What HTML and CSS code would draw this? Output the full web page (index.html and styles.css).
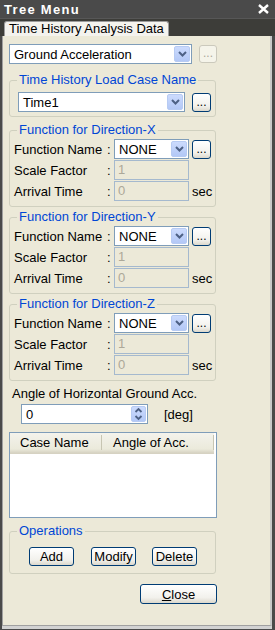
FILE: index.html
```html
<!DOCTYPE html>
<html>
<head>
<meta charset="utf-8">
<link rel="stylesheet" href="styles.css">
</head>
<body>
<div class="window">
  <div class="titlebar">
    <span class="title">Tree Menu</span>
    <svg class="close" width="11" height="10" viewBox="0 0 11 10"><path d="M1 1 L10 9 M10 1 L1 9" stroke="#fff" stroke-width="2.4" fill="none"/></svg>
  </div>
  <div class="tabstrip"><div class="tab">Time History Analysis Data</div></div>
  <div class="panel">
    <div class="row toprow">
      <div class="combo w-main"><span class="val">Ground Acceleration</span><span class="arrow"><svg width="9" height="6" viewBox="0 0 9 6"><path d="M1 1 L4.5 4.5 L8 1" stroke="#4D6185" stroke-width="2" fill="none"/></svg></span></div>
      <button class="dots disabled">...</button>
    </div>

    <fieldset class="group g-load">
      <legend>Time History Load Case Name</legend>
      <div class="row loadrow">
        <div class="combo w-load"><span class="val">Time1</span><span class="arrow"><svg width="9" height="6" viewBox="0 0 9 6"><path d="M1 1 L4.5 4.5 L8 1" stroke="#4D6185" stroke-width="2" fill="none"/></svg></span></div>
        <button class="dots">...</button>
      </div>
    </fieldset>

    <fieldset class="group g-func">
      <legend>Function for Direction-X</legend>
      <div class="fgrid">
        <span class="lbl">Function Name</span><span class="colon">:</span>
        <div class="combo"><span class="val">NONE</span><span class="arrow"><svg width="9" height="6" viewBox="0 0 9 6"><path d="M1 1 L4.5 4.5 L8 1" stroke="#4D6185" stroke-width="2" fill="none"/></svg></span></div>
        <button class="dots">...</button>
        <span class="lbl">Scale Factor</span><span class="colon">:</span>
        <div class="input disabled">1</div><span></span>
        <span class="lbl">Arrival Time</span><span class="colon">:</span>
        <div class="input disabled">0</div><span class="unit">sec</span>
      </div>
    </fieldset>

    <fieldset class="group g-func">
      <legend>Function for Direction-Y</legend>
      <div class="fgrid">
        <span class="lbl">Function Name</span><span class="colon">:</span>
        <div class="combo"><span class="val">NONE</span><span class="arrow"><svg width="9" height="6" viewBox="0 0 9 6"><path d="M1 1 L4.5 4.5 L8 1" stroke="#4D6185" stroke-width="2" fill="none"/></svg></span></div>
        <button class="dots">...</button>
        <span class="lbl">Scale Factor</span><span class="colon">:</span>
        <div class="input disabled">1</div><span></span>
        <span class="lbl">Arrival Time</span><span class="colon">:</span>
        <div class="input disabled">0</div><span class="unit">sec</span>
      </div>
    </fieldset>

    <fieldset class="group g-func">
      <legend>Function for Direction-Z</legend>
      <div class="fgrid">
        <span class="lbl">Function Name</span><span class="colon">:</span>
        <div class="combo"><span class="val">NONE</span><span class="arrow"><svg width="9" height="6" viewBox="0 0 9 6"><path d="M1 1 L4.5 4.5 L8 1" stroke="#4D6185" stroke-width="2" fill="none"/></svg></span></div>
        <button class="dots">...</button>
        <span class="lbl">Scale Factor</span><span class="colon">:</span>
        <div class="input disabled">1</div><span></span>
        <span class="lbl">Arrival Time</span><span class="colon">:</span>
        <div class="input disabled">0</div><span class="unit">sec</span>
      </div>
    </fieldset>

    <div class="anglelbl">Angle of Horizontal Ground Acc.</div>
    <div class="row spinrow">
      <div class="spin"><span class="val">0</span><span class="spinbtn"><svg width="9" height="14" viewBox="0 0 9 14"><path d="M1.5 5 L4.5 2 L7.5 5 M1.5 9 L4.5 12 L7.5 9" stroke="#4D6185" stroke-width="1.8" fill="none"/></svg></span></div>
      <span class="unit deg">[deg]</span>
    </div>

    <div class="listview">
      <div class="lvhead">
        <div class="col c1">Case Name</div>
        <div class="col c2">Angle of Acc.</div>
      </div>
    </div>

    <fieldset class="group g-ops">
      <legend>Operations</legend>
      <div class="row opsrow">
        <button class="btn b-add">Add</button>
        <button class="btn b-mod">Modify</button>
        <button class="btn b-del">Delete</button>
      </div>
    </fieldset>

    <div class="row closerow">
      <button class="btn b-close"><u>C</u>lose</button>
    </div>
  </div>
</div>
</body>
</html>
```

FILE: styles.css
```css
* { box-sizing: border-box; }
body {
  margin: 0;
  background: #4a4a4a;
  font-family: "Liberation Sans", Arial, sans-serif;
  font-size: 13px;
  color: #000;
}
.window {
  width: 275px;
  height: 630px;
  background: #4a4a4a;
  display: flex;
  flex-direction: column;
}
.titlebar {
  height: 18px;
  display: flex;
  align-items: center;
  justify-content: space-between;
  padding: 0 6px 0 4px;
  color: #fff;
}
.title {
  font-weight: bold;
  font-size: 13px;
  letter-spacing: 1.3px;
}
.close { display: block; }
.tabstrip {
  height: 18px;
  background: #3d3d39;
  border-top: 1px solid #575757;
  padding-left: 4px;
  display: flex;
  align-items: flex-end;
}
.tab {
  height: 15px;
  background: #f4f3ee;
  border: 1px solid #9c9c9c;
  border-bottom: none;
  border-radius: 3px 3px 0 0;
  padding: 0 4px;
  line-height: 14px;
  white-space: nowrap;
}
.panel {
  flex: 1;
  background: #ECE9D8;
  margin: 0 3px 4px 2px;
  border-left: 1px solid #a0a0a0;
  border-right: 2px solid #c8c8c8;
  border-bottom: 1px solid #a0a0a0;
  box-shadow: 0 3px 0 #d2d2d2;
  padding: 8px 0 0 6px;
  display: flex;
  flex-direction: column;
  align-items: flex-start;
}
.row { display: flex; align-items: center; }

/* combo */
.combo {
  height: 20px;
  border: 1px solid #7F9DB9;
  background: #fff;
  display: flex;
  align-items: center;
  padding: 1px;
}
.combo .val {
  flex: 1;
  padding-left: 3px;
  white-space: nowrap;
  overflow: hidden;
}
.arrow {
  width: 16px;
  height: 16px;
  flex: none;
  background: linear-gradient(#CCDBFD, #B3C8F6);
  border: 1px solid #B7CBF3;
  border-radius: 2px;
  display: flex;
  align-items: center;
  justify-content: center;
}
.w-main { width: 183px; }
.w-load { width: 167px; }

/* dots button */
.dots {
  width: 19px;
  height: 19px;
  padding: 0 0 3px;
  border: 1px solid #003C74;
  border-radius: 3px;
  background: linear-gradient(#ffffff, #f2f1ec 70%, #dcd8cc);
  font: 12px "Liberation Sans", Arial, sans-serif;
  color: #000;
  line-height: 12px;
  display: flex;
  align-items: flex-end;
  justify-content: center;
}
.dots.disabled {
  border-color: #CBC9BC;
  background: #F5F4EA;
  color: #ACA899;
  width: 18px;
  height: 18px;
}
.toprow { gap: 7px; }

/* groups */
.group {
  margin: 0;
  border: 1px solid #D0D0BF;
  border-radius: 3px;
  width: 207px;
  min-inline-size: 0;
  padding-left: 0;
  padding-right: 0;
}
.group legend {
  color: #0046D5;
  padding: 0 2px;
  margin-left: 7px;
  line-height: 14px;
  white-space: nowrap;
}
.g-load {
  margin-top: 9px;
  padding-top: 5px;
  padding-bottom: 4px;
}
.loadrow { gap: 7px; margin-left: 8px; }
.g-func {
  padding-top: 2px;
  padding-bottom: 5px;
}
.g-load + .g-func { margin-top: 6px; }
.g-func + .g-func { margin-top: 3px; }
.fgrid {
  margin-left: 4px;
  display: grid;
  grid-template-columns: 93px 7px 75px 19px;
  grid-auto-rows: 20px;
  row-gap: 1px;
  column-gap: 0;
  align-items: center;
}
.fgrid .dots { margin-left: 3px; }
.lbl { white-space: nowrap; }
.input {
  height: 20px;
  border: 1px solid #7F9DB9;
  padding-left: 3px;
  line-height: 18px;
}
.input.disabled {
  background: #ECE9D8;
  border-color: #A5B9CE;
  color: #ACA899;
}
.unit { margin-left: 3px; white-space: nowrap; }

/* angle */
.anglelbl {
  margin-top: 6px;
  margin-left: 3px;
  line-height: 14px;
}
.spinrow { margin-top: 3px; margin-left: 12px; }
.spin {
  width: 127px;
  height: 20px;
  border: 1px solid #7F9DB9;
  background: #fff;
  display: flex;
  align-items: center;
  padding: 1px;
}
.spin .val { flex: 1; padding-left: 3px; }
.spinbtn {
  width: 15px;
  height: 16px;
  background: linear-gradient(#CCDBFD, #B3C8F6);
  border: 1px solid #B7CBF3;
  border-radius: 2px;
  display: flex;
  align-items: center;
  justify-content: center;
}
.deg { margin-left: 16px; }

/* list view */
.listview {
  margin-top: 8px;
  width: 208px;
  height: 86px;
  border: 1px solid #7F9DB9;
  background: #fff;
  padding: 0 2px 0 0;
}
.lvhead {
  height: 21px;
  display: flex;
  background: linear-gradient(#F4F3EC, #EBEADB 80%, #D6D2C2);
  border-bottom: 1px solid #D6D2C2;
}
.col { white-space: nowrap; }
.c1 {
  width: 92px;
  padding-left: 10px;
  border-right: 1px solid #C7C5B2;
  margin: 2px 0 3px;
  line-height: 16px;
}
.c2 {
  flex: 1;
  padding-left: 11px;
  border-right: 1px solid #C7C5B2;
  margin: 2px 0 3px;
  line-height: 16px;
}

/* operations */
.g-ops {
  margin-top: 6px;
  padding-top: 9px;
  padding-bottom: 7px;
}
.opsrow { margin-left: 19px; }
.btn {
  height: 19px;
  border: 1px solid #003C74;
  border-radius: 3px;
  background: linear-gradient(#ffffff, #f2f1ec 70%, #dcd8cc);
  font: 13px "Liberation Sans", Arial, sans-serif;
  color: #000;
  padding: 0;
}
.b-add { width: 45px; }
.b-mod { width: 45px; margin-left: 17px; }
.b-del { width: 45px; margin-left: 16px; }
.closerow { margin-top: 10px; margin-left: 131px; }
.b-close { width: 77px; height: 20px; }
```
